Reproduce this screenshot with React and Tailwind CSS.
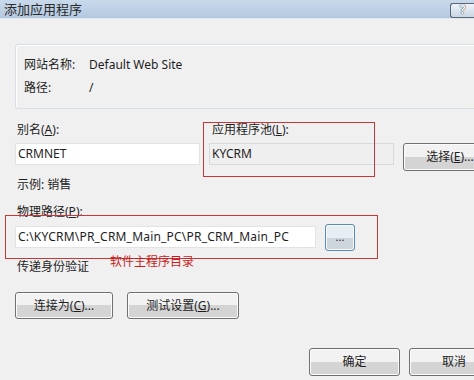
import React from "react";

const font = { fontFamily: '"Noto Sans", "Noto Sans CJK SC", sans-serif' };

function WinButton({ children, className = "" }) {
  return (
    <div
      className={`flex items-center justify-center rounded-[3px] border border-[#707070] bg-gradient-to-b from-[#f2f2f2] from-50% to-[#d4d4d4] to-50% text-[12px] text-[#1e1e1e] shadow-[inset_0_0_0_1px_#fcfcfc] ${className}`}
    >
      {children}
    </div>
  );
}

export default function App() {
  return (
    <div
      className="relative h-[380px] w-[474px] overflow-hidden bg-[#f0f0f0] text-[12px] text-[#1e1e1e]"
      style={font}
    >
      {/* title bar */}
      <div className="flex h-[19px] items-center justify-between border-b border-[#dfe8f1] bg-gradient-to-b from-[#c8d9eb] to-[#b4c9e1] pl-[4px]">
        <span className="text-[13px] leading-none text-[#2a2a2a]">添加应用程序</span>
        <div className="mt-[2px] flex h-[15px] w-[24px] items-center justify-center rounded-l-[3px] border border-r-0 border-[#5a6775] bg-gradient-to-b from-[#eef3f8] to-[#c9d6e4] text-[12px] font-bold leading-none text-[#f4f6f8] [text-shadow:0_0_1px_#3a4450,0_0_1px_#3a4450]">
          ?
        </div>
      </div>

      <div className="px-[15px]">
        {/* group box */}
        <div className="mt-[25px] h-[65px] w-[480px] rounded-[3px] border border-[#d5dfe5] shadow-[inset_1px_1px_0_#ffffff] pl-[8px] pt-[12px]">
          <div className="flex h-[16px] items-center">
            <span className="w-[65px]">网站名称:</span>
            <span>Default Web Site</span>
          </div>
          <div className="mt-[7px] flex h-[16px] items-center">
            <span className="w-[65px]">路径:</span>
            <span>/</span>
          </div>
        </div>

        {/* alias / pool */}
        <div className="mt-[13px] flex h-[16px] items-center">
          <span className="w-[194px] shrink-0 pl-[2px]">
            别名(<u>A</u>):
          </span>
          <span className="pl-[3px]">
            应用程序池(<u>L</u>):
          </span>
        </div>
        <div className="mt-[5px] flex h-[22px] items-start">
          <div className="flex h-[22px] w-[185px] shrink-0 items-center border border-[#e1e3e6] bg-white pl-[2px]">
            CRMNET
          </div>
          <div className="ml-[9px] flex h-[22px] w-[185px] shrink-0 items-center border border-[#d9dadc] bg-[#efefef] pl-[2px]">
            KYCRM
          </div>
          <WinButton className="ml-[9px] h-[28px] w-[94px] shrink-0">
            选择(<u>E</u>)...
          </WinButton>
        </div>

        <div className="mt-[12px] h-[16px] pl-[2px] leading-[16px]">示例: 销售</div>

        <div className="mt-[11px] h-[16px] pl-[2px] leading-[16px]">
          物理路径(<u>P</u>):
        </div>
        <div className="mt-[6px] flex h-[22px] items-center">
          <div className="flex h-[22px] w-[301px] shrink-0 items-center border border-[#e1e3e6] bg-white pl-[2px] tracking-[0.2px]">
            C:\KYCRM\PR_CRM_Main_PC\PR_CRM_Main_PC
          </div>
          <div className="ml-[9px] flex h-[27px] w-[30px] shrink-0 items-center justify-center rounded-[3px] border border-[#5b8bae] bg-gradient-to-b from-[#e6eef3] from-50% to-[#cdd6dc] to-50% pb-[2px] text-[11px] leading-none shadow-[inset_0_0_0_1px_#f4f9fc]">
            ...
          </div>
        </div>

        <div className="mt-[11px] h-[16px] pl-[2px] leading-[16px]">传递身份验证</div>

        <div className="mt-[17px] flex gap-[14px]">
          <WinButton className="h-[27px] w-[98px] shrink-0">
            连接为(<u>C</u>)...
          </WinButton>
          <WinButton className="h-[27px] w-[112px] shrink-0">
            测试设置(<u>G</u>)...
          </WinButton>
        </div>

        <div className="mt-[29px] flex w-[500px] gap-[9px] pl-[294px]">
          <WinButton className="h-[28px] w-[91px] shrink-0">确定</WinButton>
          <WinButton className="h-[28px] w-[90px] shrink-0">取消</WinButton>
        </div>
      </div>

      {/* red annotations */}
      <div className="absolute left-[203px] top-[122px] h-[55px] w-[172px] border border-[#c4383a]" />
      <div className="absolute left-[5px] top-[215px] h-[44px] w-[373px] border border-[#c4383a]" />
      <div className="absolute left-[110px] top-[254px] text-[12px] leading-[16px] text-[#c81e1e]">
        软件主程序目录
      </div>
    </div>
  );
}
